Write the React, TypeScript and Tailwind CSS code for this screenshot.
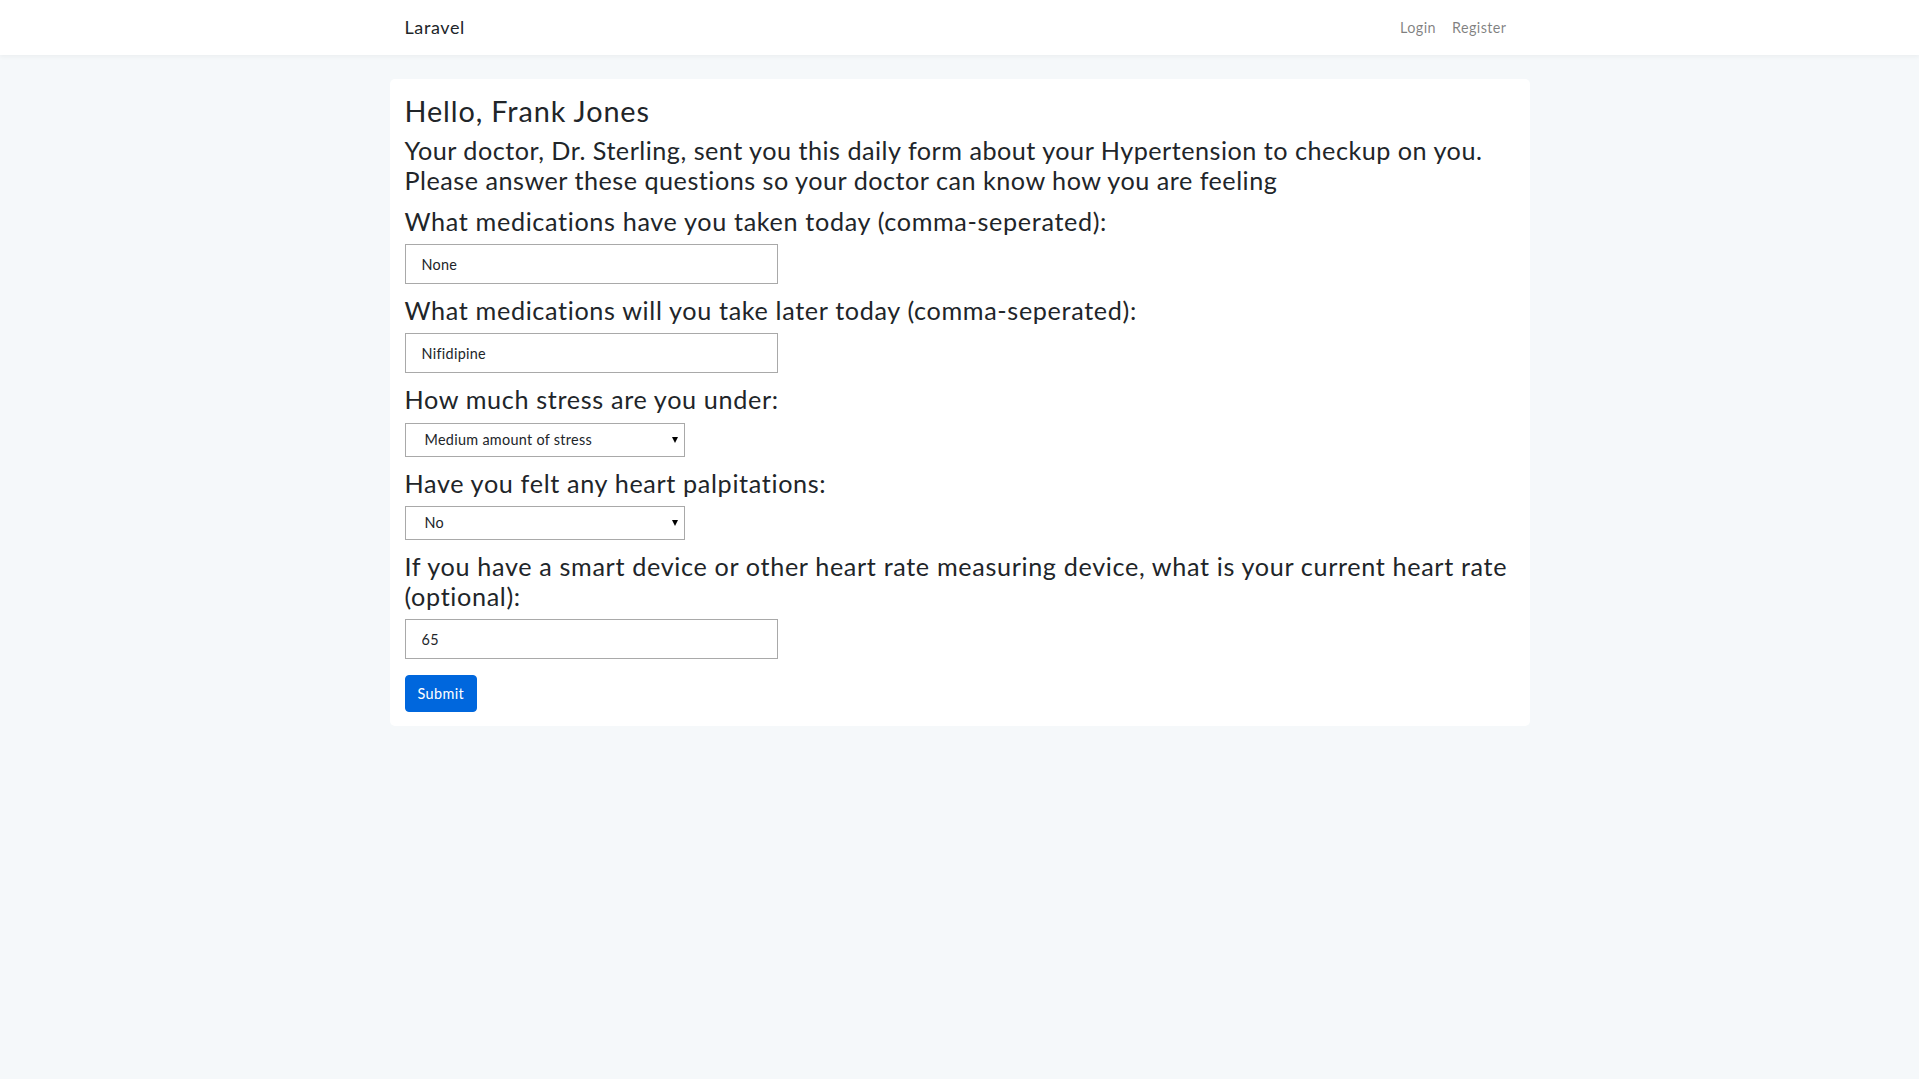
import { useState } from "react";

const font = { fontFamily: "Lato, 'Open Sans', sans-serif" };

function Field({ label, children }: { label: React.ReactNode; children: React.ReactNode }) {
  return (
    <div className="flex flex-col">
      <h3 className="text-[25.2px] leading-[1.2] tracking-[0.65px] mb-2 text-[#212529]">{label}</h3>
      <div className="mb-[11px]">{children}</div>
    </div>
  );
}

function Select({ value, options, onChange }: { value: string; options: string[]; onChange: (v: string) => void }) {
  return (
    <div className="relative w-[280px]">
      <select
        value={value}
        onChange={(e) => onChange(e.target.value)}
        className="appearance-none w-full h-[34px] bg-white border border-[#a9a9a9] pl-[19px] pr-6 text-[14.4px] tracking-[0.3px] text-[#212529] outline-none"
      >
        {options.map((o) => (
          <option key={o} value={o}>
            {o}
          </option>
        ))}
      </select>
      <span className="pointer-events-none absolute right-[7px] top-[14px] w-0 h-0 border-l-[3.5px] border-r-[3.5px] border-t-[6px] border-l-transparent border-r-transparent border-t-black" />
    </div>
  );
}

export default function App() {
  const [taken, setTaken] = useState("None");
  const [later, setLater] = useState("Nifidipine");
  const [stress, setStress] = useState("Medium amount of stress");
  const [palp, setPalp] = useState("No");
  const [rate, setRate] = useState("65");

  const inputCls =
    "w-[373px] h-[40px] border border-[#a9a9a9] px-4 text-[14.4px] tracking-[0.3px] text-[#212529] outline-none";

  return (
    <div className="min-h-screen bg-[#f5f8fa] text-[#212529]" style={font}>
      <nav className="bg-white shadow-[0_2px_4px_rgba(0,0,0,0.04)]">
        <div className="w-[1140px] mx-auto px-[15px] h-[55px] flex items-center justify-between">
          <a className="text-[18px] tracking-[0.6px] text-[#212529]">Laravel</a>
          <div className="flex text-[14.4px] tracking-[0.4px] text-black/50">
            <a className="px-2">Login</a>
            <a className="px-2">Register</a>
          </div>
        </div>
      </nav>

      <main className="py-6">
        <div className="w-[1140px] mx-auto bg-white rounded-[5px] px-[15px] pt-[14.5px] pb-[14px]">
          <h2 className="text-[28.8px] leading-[1.2] tracking-[0.9px] mb-2">Hello, Frank Jones</h2>
          <h3 className="text-[25.2px] leading-[1.2] tracking-[0.5px] -mt-px mb-[10.5px]">
            Your doctor, Dr. Sterling, sent you this daily form about your Hypertension to checkup on you.
            <br />
            Please answer these questions so your doctor can know how you are feeling
          </h3>

          <Field label="What medications have you taken today (comma-seperated):">
            <input value={taken} onChange={(e) => setTaken(e.target.value)} className={inputCls} />
          </Field>
          <Field label="What medications will you take later today (comma-seperated):">
            <input value={later} onChange={(e) => setLater(e.target.value)} className={inputCls} />
          </Field>
          <Field label="How much stress are you under:">
            <Select
              value={stress}
              onChange={setStress}
              options={["Low amount of stress", "Medium amount of stress", "High amount of stress"]}
            />
          </Field>
          <Field label="Have you felt any heart palpitations:">
            <Select value={palp} onChange={setPalp} options={["No", "Yes"]} />
          </Field>
          <Field
            label={
              <>
                If you have a smart device or other heart rate measuring device, what is your current heart rate
                <br />
                (optional):
              </>
            }
          >
            <input value={rate} onChange={(e) => setRate(e.target.value)} className={inputCls} />
          </Field>

          <button className="mt-[5px] bg-[#0067dd] text-white text-[14.4px] tracking-[0.4px] leading-[1.6] px-3 py-[6px] border border-[#0067dd] rounded-[4px]">
            Submit
          </button>
        </div>
      </main>
    </div>
  );
}
